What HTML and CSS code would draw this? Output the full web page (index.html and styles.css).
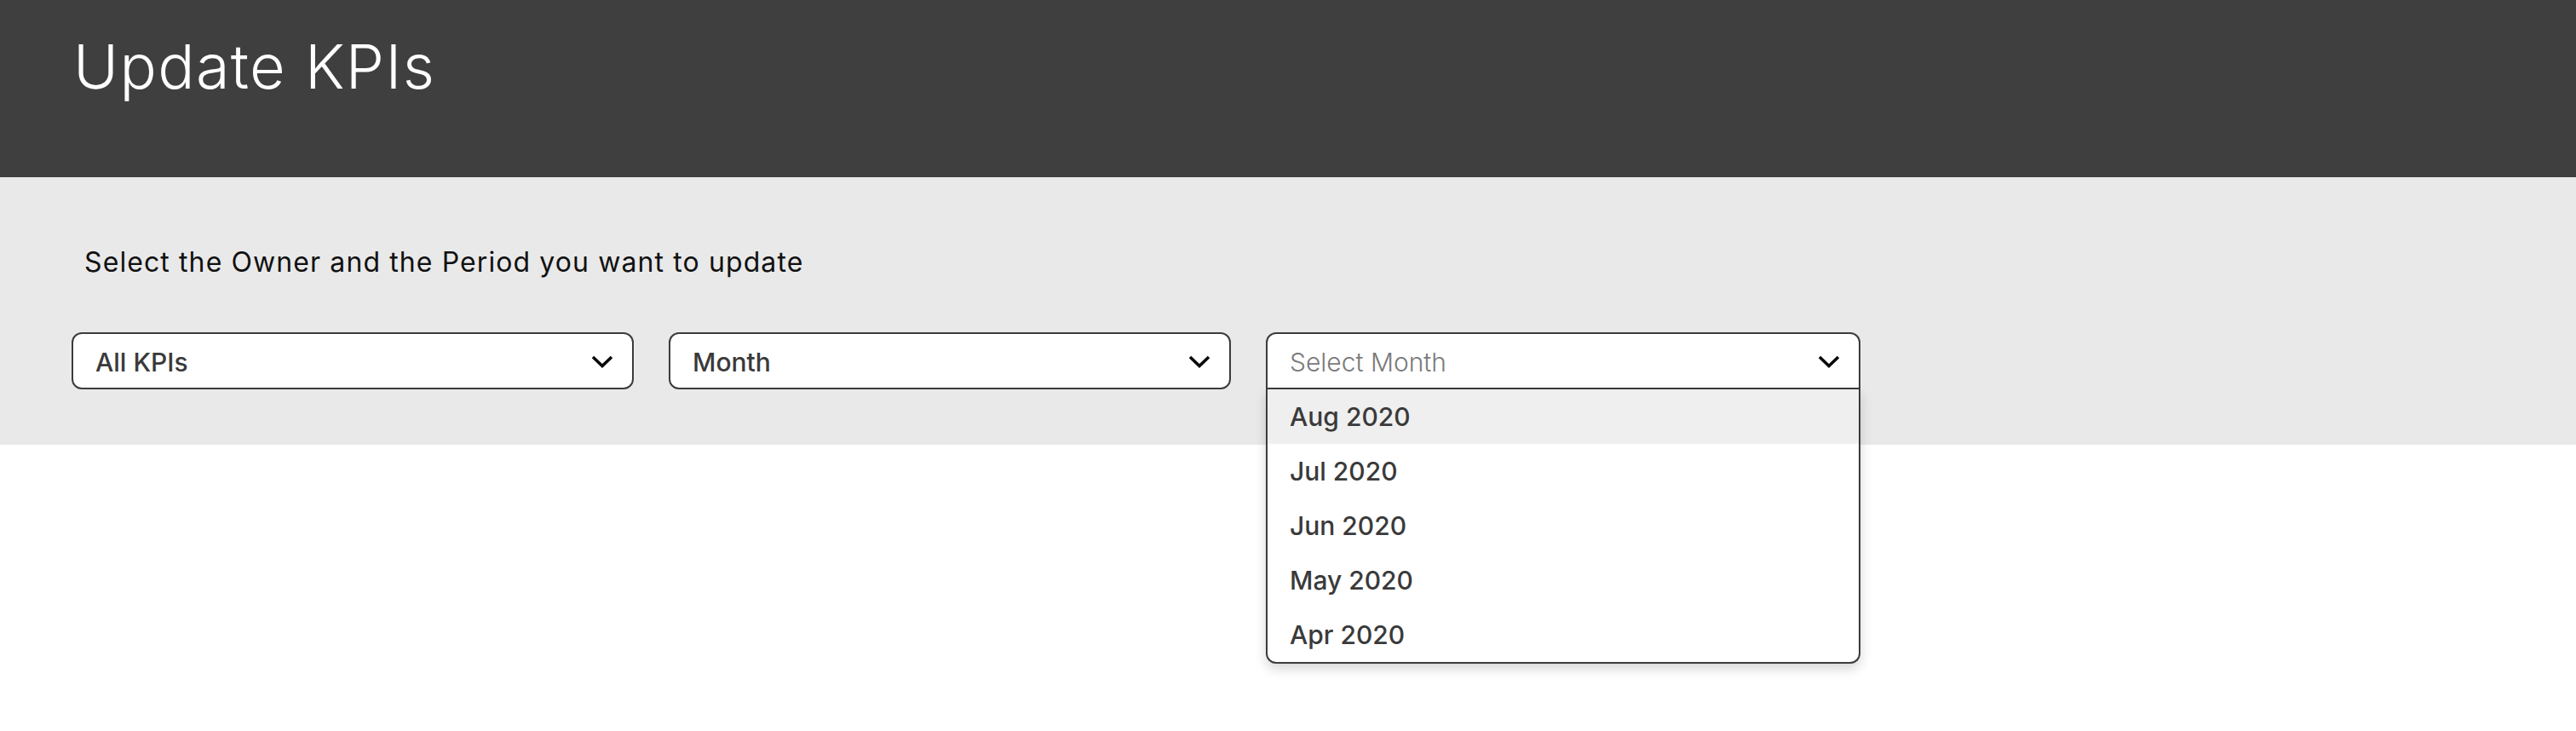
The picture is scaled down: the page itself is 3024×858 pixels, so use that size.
FILE: index.html
```html
<!DOCTYPE html>
<html lang="en">
<head>
<meta charset="utf-8">
<title>Update KPIs</title>
<link rel="stylesheet" href="styles.css">
</head>
<body>
<div class="page">
  <header class="topbar">
    <h1 class="title">Update KPIs</h1>
  </header>

  <section class="filters">
    <p class="prompt">Select the Owner and the Period you want to update</p>
    <div class="selects">
      <div class="select">
        <span class="select__value">All KPIs</span>
        <svg class="chev" width="26" height="15" viewBox="0 0 26 15"><polyline points="2,2 13,12.5 24,2"/></svg>
      </div>
      <div class="select">
        <span class="select__value">Month</span>
        <svg class="chev" width="26" height="15" viewBox="0 0 26 15"><polyline points="2,2 13,12.5 24,2"/></svg>
      </div>
      <div class="combo">
        <div class="select select--open">
          <span class="select__placeholder">Select Month</span>
          <svg class="chev" width="26" height="15" viewBox="0 0 26 15"><polyline points="2,2 13,12.5 24,2"/></svg>
        </div>
        <ul class="menu">
          <li class="menu__item menu__item--active">Aug 2020</li>
          <li class="menu__item">Jul 2020</li>
          <li class="menu__item">Jun 2020</li>
          <li class="menu__item">May 2020</li>
          <li class="menu__item">Apr 2020</li>
        </ul>
      </div>
    </div>
  </section>

  <main class="content"></main>
</div>
</body>
</html>
```

FILE: styles.css
```css
html, body {
  margin: 0;
  padding: 0;
  background: #ffffff;
  font-family: Inter, "Open Sans", "Liberation Sans", sans-serif;
}

.page {
  display: flex;
  flex-direction: column;
  min-height: 100vh;
}

/* dark page header */
.topbar {
  box-sizing: border-box;
  height: 208px;
  padding: 42px 0 0 86px;
  background: #3f3f3f;
}

.title {
  margin: 0;
  font-size: 72px;
  line-height: 72px;
  font-weight: 300;
  letter-spacing: 1.4px;
  color: #ffffff;
}

/* grey filter band */
.filters {
  position: relative;
  z-index: 1;
  padding: 84px 84px 65px;
  background: #e9e9e9;
}

.prompt {
  margin: 0 0 66px 15px;
  font-size: 32px;
  line-height: 32px;
  font-weight: 400;
  letter-spacing: 1.1px;
  color: #111111;
}

.selects {
  display: flex;
  gap: 41px;
}

.select {
  box-sizing: border-box;
  width: 660px;
  height: 67px;
  display: flex;
  align-items: center;
  justify-content: space-between;
  padding: 2px 22px 0 26px;
  border: 2px solid #3c3c3c;
  border-radius: 12px;
  background: #ffffff;
  font-size: 30px;
  font-weight: 500;
  color: #3a3a3a;
}

.select__placeholder {
  font-weight: 300;
  color: #7a7a7a;
}

.chev {
  flex: none;
}

.chev polyline {
  fill: none;
  stroke: #0a0a0a;
  stroke-width: 3.6;
}

/* open month picker */
.combo {
  position: relative;
  width: 698px;
}

.combo .select {
  width: 100%;
  border-radius: 12px 12px 0 0;
}

.menu {
  position: absolute;
  top: 100%;
  left: 0;
  right: 0;
  z-index: 10;
  margin: 0;
  padding: 0;
  list-style: none;
  background: #ffffff;
  border: 2px solid #3c3c3c;
  border-top: 0;
  border-radius: 0 0 12px 12px;
  box-shadow: 0 6px 14px rgba(0, 0, 0, 0.16);
  overflow: hidden;
}

.menu__item {
  height: 64px;
  line-height: 64px;
  padding-left: 26px;
  font-size: 30px;
  font-weight: 500;
  color: #3a3a3a;
}

.menu__item--active {
  background: #efefef;
}

.content {
  flex: 1;
  background: #ffffff;
}
```
